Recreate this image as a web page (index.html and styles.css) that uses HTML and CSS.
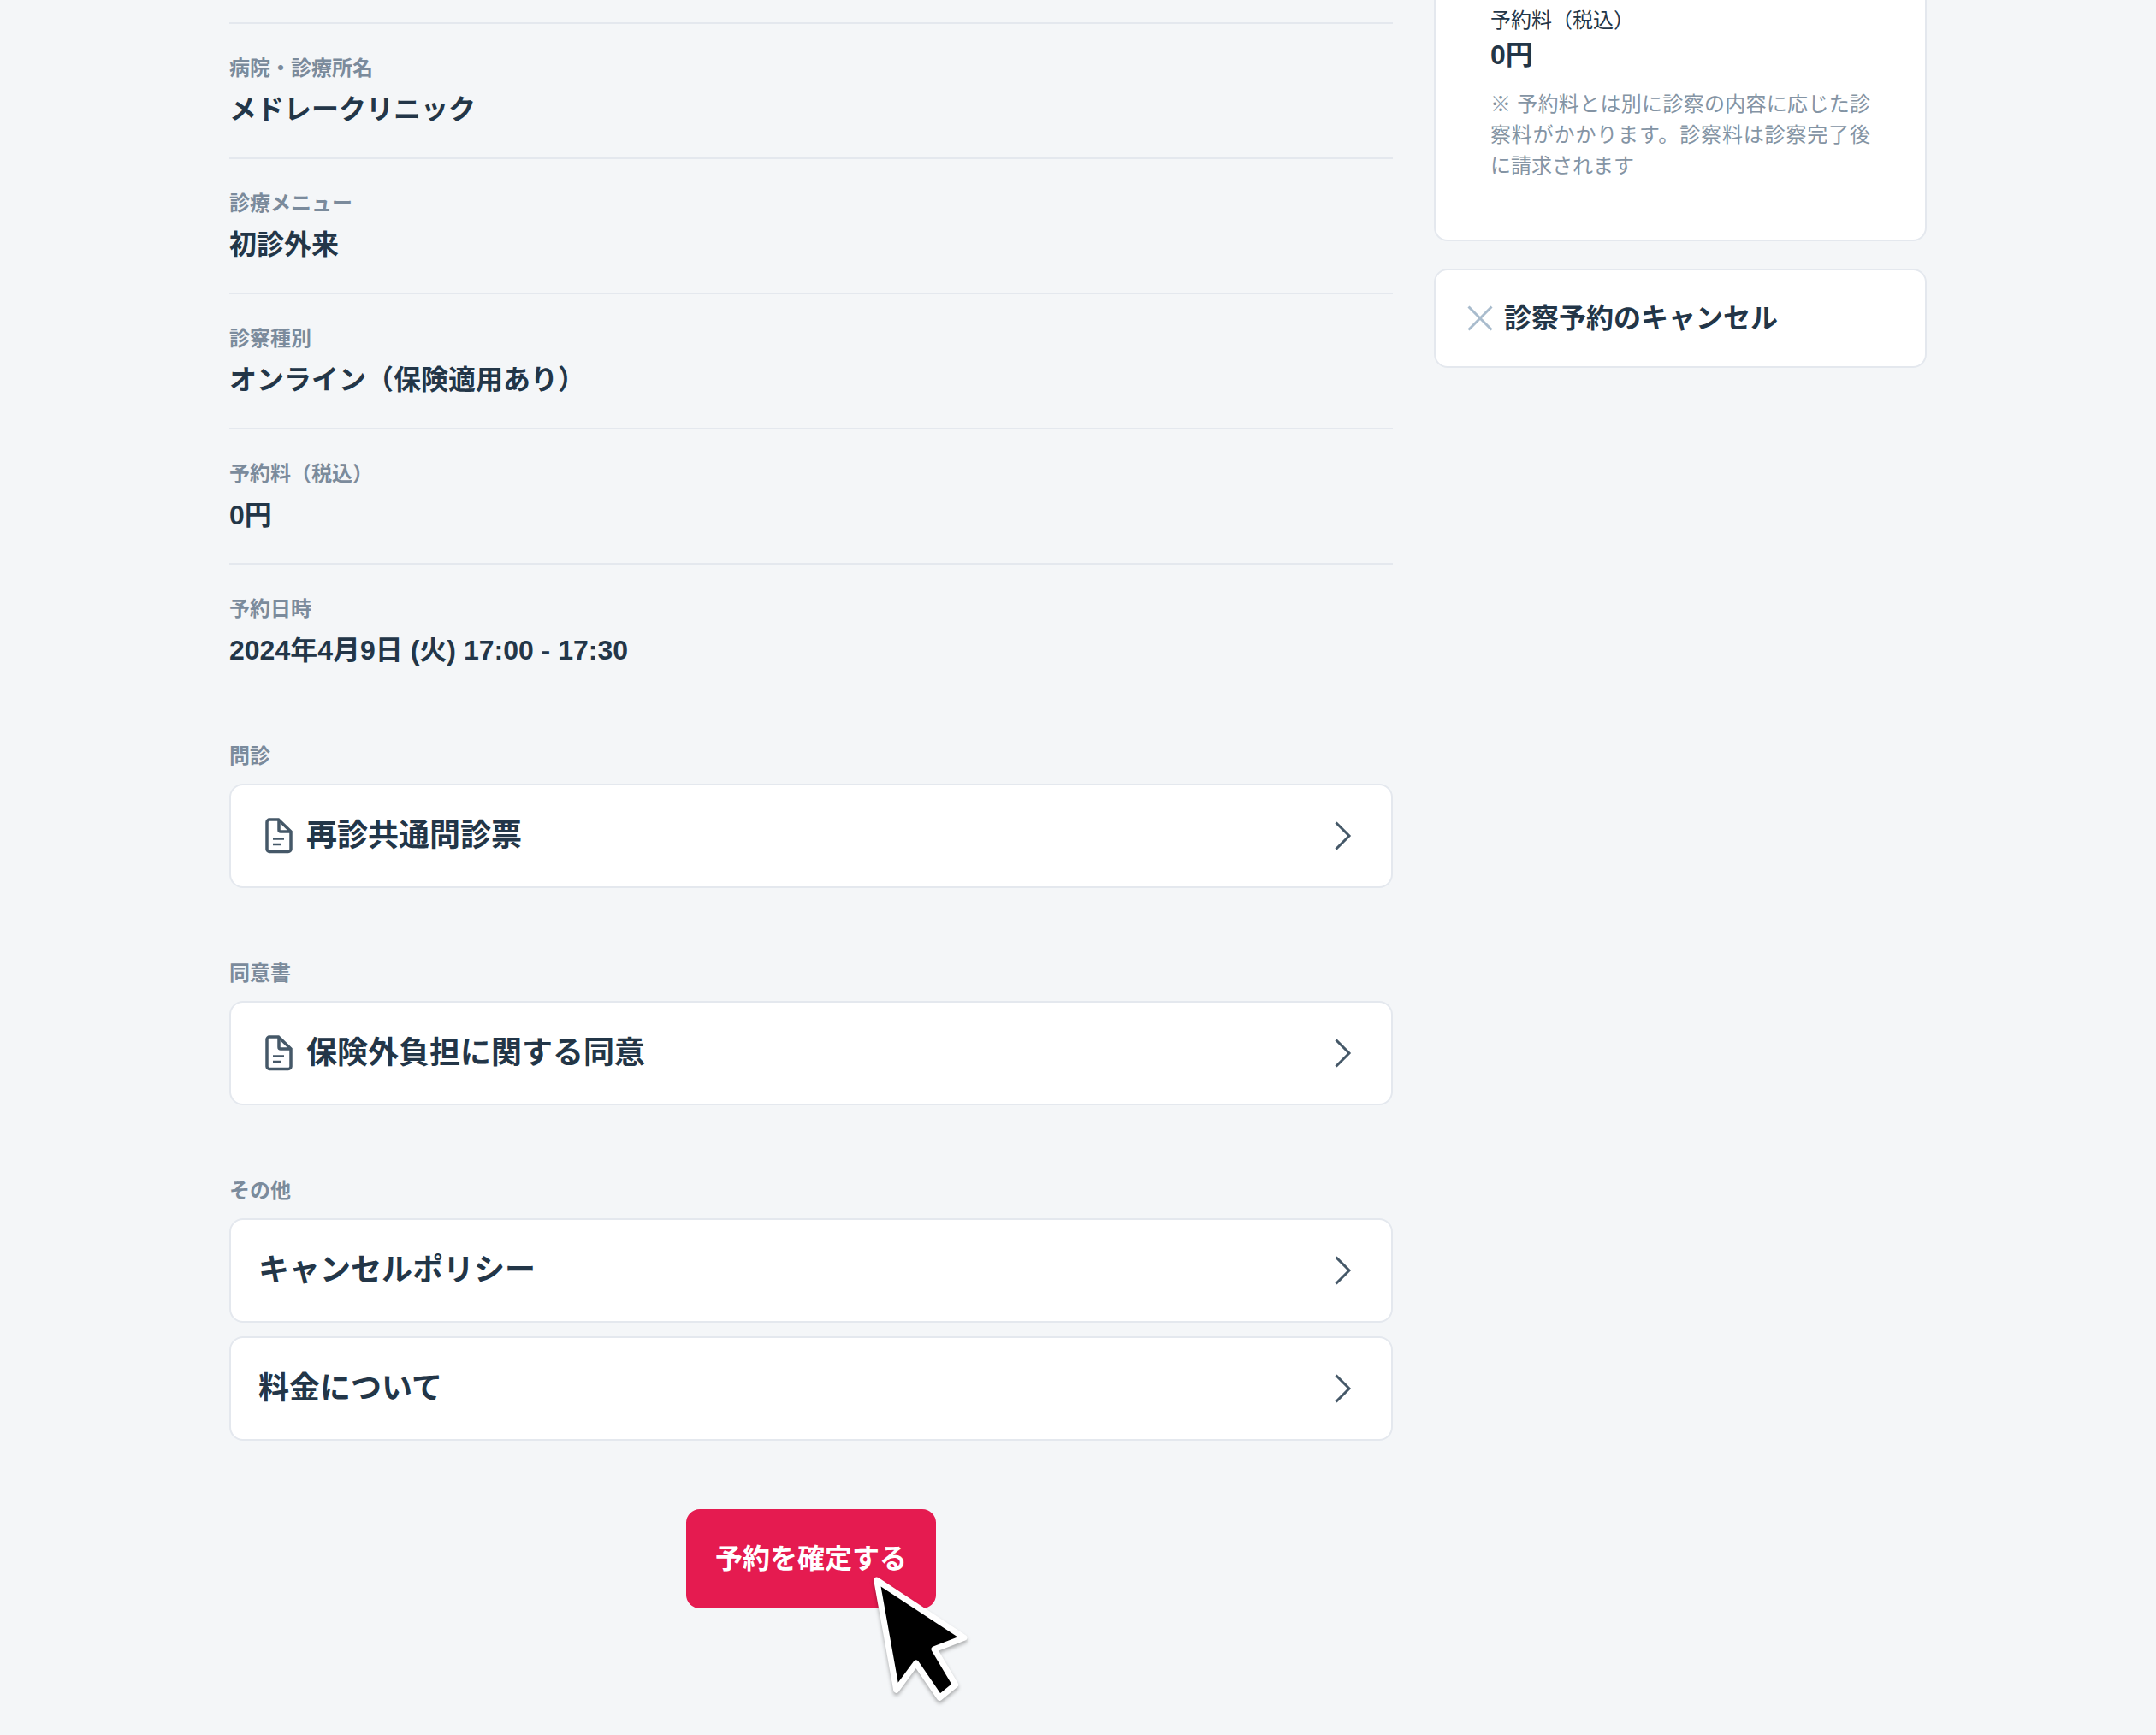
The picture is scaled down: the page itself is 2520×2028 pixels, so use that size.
FILE: index.html
```html
<!DOCTYPE html>
<html lang="ja">
<head>
    <meta charset="UTF-8">
    <meta name="viewport" content="width=device-width, initial-scale=1.0">
    <title>診察予約の確認</title>
    <link rel="stylesheet" href="styles.css">
</head>
<body>
    <!-- Shared icons -->
    <svg class="sprite" aria-hidden="true">
        <symbol id="icon-document" viewBox="0 0 48 48">
            <path d="M13 5h10.500l14.500 14v20.500a3 3 0 0 1-3 3h-22a3 3 0 0 1-3-3v-31.500a3 3 0 0 1 3-3z" stroke-width="3.500"/>
            <path d="M24 5.500v11.500a2 2 0 0 0 2 2h12" stroke-width="3.500"/>
            <path d="M17 27.500h13M17 34h9" stroke-width="2.500"/>
        </symbol>
        <symbol id="icon-chevron" viewBox="0 0 48 48">
            <path d="M15.500 8.500l15.500 15.500l-15.500 15.500" stroke-width="3"/>
        </symbol>
        <symbol id="icon-close" viewBox="0 0 40 40">
            <path d="M6.500 6.500l27 27M33.500 6.500l-27 27" stroke-width="3"/>
        </symbol>
    </svg>

    <div class="container">
        <main class="main">
            <dl class="detail-list">
                <div class="detail">
                    <dt class="label">病院・診療所名</dt>
                    <dd>メドレークリニック</dd>
                </div>
                <div class="detail">
                    <dt class="label">診療メニュー</dt>
                    <dd>初診外来</dd>
                </div>
                <div class="detail">
                    <dt class="label">診察種別</dt>
                    <dd>オンライン（保険適用あり）</dd>
                </div>
                <div class="detail">
                    <dt class="label">予約料（税込）</dt>
                    <dd>0円</dd>
                </div>
                <div class="detail">
                    <dt class="label">予約日時</dt>
                    <dd>2024年4月9日 (火) 17:00 - 17:30</dd>
                </div>
            </dl>

            <section class="section">
                <h2 class="label">問診</h2>
                <a href="#" class="card link-card">
                    <svg class="icon"><use href="#icon-document"/></svg>
                    <span>再診共通問診票</span>
                    <svg class="icon chevron"><use href="#icon-chevron"/></svg>
                </a>
            </section>

            <section class="section">
                <h2 class="label">同意書</h2>
                <a href="#" class="card link-card">
                    <svg class="icon"><use href="#icon-document"/></svg>
                    <span>保険外負担に関する同意</span>
                    <svg class="icon chevron"><use href="#icon-chevron"/></svg>
                </a>
            </section>

            <section class="section">
                <h2 class="label">その他</h2>
                <div class="card-list">
                    <a href="#" class="card link-card">
                        <span>キャンセルポリシー</span>
                        <svg class="icon chevron"><use href="#icon-chevron"/></svg>
                    </a>
                    <a href="#" class="card link-card">
                        <span>料金について</span>
                        <svg class="icon chevron"><use href="#icon-chevron"/></svg>
                    </a>
                </div>
            </section>

            <div class="actions">
                <button type="button" class="submit-button">予約を確定する</button>
                <svg class="cursor" viewBox="0 0 120 156" aria-hidden="true">
                    <path d="M8.700 7L111 74.300L76 87.700L100.700 129.300L82.300 144.300L54.700 104L31.700 135.300Z"/>
                </svg>
            </div>
        </main>

        <aside class="sidebar">
            <div class="card fee-card">
                <p class="fee-label">予約料（税込）</p>
                <p class="fee">0円</p>
                <p class="note">※ 予約料とは別に診察の内容に応じた診察料がかかります。診察料は診察完了後に請求されます</p>
            </div>
            <button type="button" class="card cancel-button">
                <svg class="icon"><use href="#icon-close"/></svg>
                <span>診察予約のキャンセル</span>
            </button>
        </aside>
    </div>
</body>
</html>
```
FILE: styles.css
```css
* {
    box-sizing: border-box;
}
body {
    margin: 0;
    background-color: #f4f6f8;
    color: #233648;
    font-family: "Liberation Sans", "Noto Sans CJK JP", sans-serif;
    font-size: 24px;
    line-height: 36px;
}
p, dl, dd, h2 {
    margin: 0;
}
button {
    font-family: inherit;
    color: inherit;
    cursor: pointer;
}
.sprite {
    display: none;
}
.icon {
    flex: none;
    width: 48px;
    height: 48px;
    fill: none;
    stroke: #455868;
}
.container {
    display: flex;
    align-items: flex-start;
    gap: 48px;
    max-width: 1984px;
    margin: 0 auto;
}
.main {
    flex: 1;
    min-width: 0;
    padding: 26px 0 148px;
}
.label {
    font-size: 24px;
    font-weight: 600;
    line-height: 40px;
    color: #7b8b9c;
}
.card {
    background-color: #ffffff;
    border: 2px solid #e4e8ee;
    border-radius: 16px;
}

/* --- Reservation details --- */
.detail {
    padding: 32px 0;
    border-top: 2px solid #e4e8ee;
}
.detail:last-child {
    padding-bottom: 0;
}
.detail dd {
    margin-top: 4px;
    font-size: 32px;
    font-weight: 600;
    line-height: 48px;
}

/* --- Linked documents --- */
.section {
    display: flex;
    flex-direction: column;
    gap: 12px;
    margin-top: 80px;
}
.card-list {
    display: flex;
    flex-direction: column;
    gap: 16px;
}
.link-card {
    display: flex;
    align-items: center;
    gap: 8px;
    padding: 32px;
    font-size: 36px;
    font-weight: 600;
    line-height: 54px;
    color: inherit;
    text-decoration: none;
}
.chevron {
    margin-left: auto;
}

/* --- Confirm button --- */
.actions {
    position: relative;
    width: fit-content;
    margin: 80px auto 0;
}
.submit-button {
    display: block;
    padding: 34px;
    border: none;
    border-radius: 16px;
    background-color: #e51b50;
    color: #ffffff;
    font-size: 32px;
    font-weight: 600;
    line-height: 48px;
}
.cursor {
    position: absolute;
    top: 76px;
    left: 214px;
    width: 120px;
    height: 156px;
    fill: #000000;
    stroke: #ffffff;
    stroke-width: 7px;
    stroke-linejoin: round;
    filter: drop-shadow(0 3px 2px rgba(0, 0, 0, 0.3));
    pointer-events: none;
}

/* --- Sidebar --- */
.sidebar {
    display: flex;
    flex-direction: column;
    gap: 32px;
    width: 576px;
}
.fee-card {
    padding: 8px 64px 68px;
    border-top: none;
    border-radius: 0 0 16px 16px;
}
.fee-label {
    line-height: 32px;
}
.fee {
    font-size: 32px;
    font-weight: 600;
    line-height: 48px;
}
.note {
    margin-top: 16px;
    color: #8494a4;
    text-align: justify;
}
.cancel-button {
    display: flex;
    align-items: center;
    gap: 8px;
    padding: 32px;
    font-size: 32px;
    font-weight: 600;
    line-height: 48px;
}
.cancel-button .icon {
    width: 40px;
    height: 40px;
    stroke: #a9bccd;
}
```
